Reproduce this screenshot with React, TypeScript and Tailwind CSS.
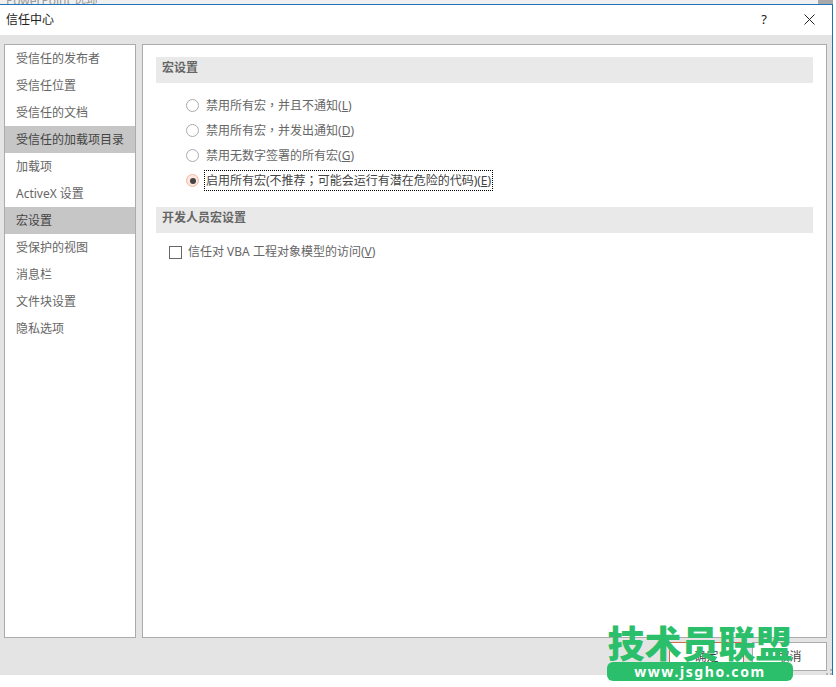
import type { ReactNode } from "react";

const navItems = [
  "受信任的发布者",
  "受信任位置",
  "受信任的文档",
  "受信任的加载项目录",
  "加载项",
  "ActiveX 设置",
  "宏设置",
  "受保护的视图",
  "消息栏",
  "文件块设置",
  "隐私选项",
];

// centred full-width punctuation, as the original dialog font draws it
function Punct({ children }: { children: string }) {
  return <span className="font-['Noto_Sans_CJK_TC',sans-serif]">{children}</span>;
}

function Radio({ checked, label, hotkey }: { checked?: boolean; label: ReactNode; hotkey: string }) {
  return (
    <div className="flex h-[25px] items-center">
      <span
        className={`flex h-[13px] w-[13px] items-center justify-center rounded-full border ${
          checked ? "border-[#f0b8a4] bg-[#fde6de]" : "border-[#ababab] bg-white"
        }`}
      >
        {checked && <span className="h-[6px] w-[6px] rounded-full bg-[#444]" />}
      </span>
      <span
        className={`ml-[5px] px-[1px] text-[12px] leading-[18px] ${
          checked ? "border border-dotted border-black text-[#444]" : "border border-transparent text-[#666]"
        }`}
      >
        {label}(<span className="underline">{hotkey}</span>)
      </span>
    </div>
  );
}

function SectionHeader({ children }: { children: string }) {
  return (
    <div className="flex h-[26px] items-center bg-[#e9e9e9] pb-[4px] pl-[6px] text-[12px] font-bold text-[#666]">
      {children}
    </div>
  );
}

export default function App() {
  return (
    <div className="relative h-[687px] w-[836px] overflow-hidden bg-white font-['Noto_Sans','Noto_Sans_CJK_SC',sans-serif]">
      {/* window behind the dialog */}
      <div className="mr-[3px] flex h-[4px] overflow-hidden bg-[#f0f0f0] pl-[6px] text-[12px] leading-[2px] text-[#999]">
        <span>PowerPoint 选项</span>
        <span className="ml-auto h-[4px] w-[15px] bg-[#a8a8a8]" />
      </div>

      <div className="mr-[3px] flex h-[671px] flex-col border-r border-t border-[#1c75bc] bg-[#e4e4e4]">
        {/* title bar */}
        <div className="flex h-[30px] shrink-0 items-center bg-white pl-[6px] pr-[17px]">
          <span className="text-[12px] text-[#222]">信任中心</span>
          <span className="ml-auto text-[13px] text-[#222]">?</span>
          <svg className="ml-[37px] -mt-[1px]" width="11" height="11" viewBox="0 0 11 11" fill="none" stroke="#222">
            <path d="M.5.5l10 10M10.5.5l-10 10" />
          </svg>
        </div>

        <div className="flex gap-[6px] pl-[4px] pr-[5px] pt-[9px]">
          {/* left nav */}
          <div className="h-[594px] w-[132px] shrink-0 border border-[#ababab] bg-white">
            {navItems.map((item) => (
              <div
                key={item}
                className={`flex h-[27px] items-center pl-[11px] text-[12px] ${
                  item === "受信任的加载项目录" || item === "宏设置"
                    ? "bg-[#c6c6c6] text-[#444]"
                    : "text-[#666]"
                }`}
              >
                {item}
              </div>
            ))}
          </div>

          {/* main panel */}
          <div className="h-[594px] flex-1 border border-[#ababab] bg-white pl-[13px] pr-[13px] pt-[12px]">
            <SectionHeader>宏设置</SectionHeader>
            <div className="pl-[30px] pt-[10px]">
              <Radio label={<>禁用所有宏<Punct>，</Punct>并且不通知</>} hotkey="L" />
              <Radio label={<>禁用所有宏<Punct>，</Punct>并发出通知</>} hotkey="D" />
              <Radio label="禁用无数字签署的所有宏" hotkey="G" />
              <Radio checked label={<>启用所有宏(不推荐<Punct>；</Punct>可能会运行有潜在危险的代码)</>} hotkey="E" />
            </div>
            <div className="pt-[14px]">
              <SectionHeader>开发人员宏设置</SectionHeader>
            </div>
            <div className="flex items-center pl-[13px] pt-[10px] text-[12px] text-[#666]">
              <span className="h-[13px] w-[13px] border border-[#666] bg-white" />
              <span className="ml-[6px]">
                信任对 VBA 工程对象模型的访问(<span className="underline">V</span>)
              </span>
            </div>
          </div>
        </div>

        {/* footer buttons */}
        <div className="flex justify-end gap-[8px] pr-[5px] pt-[4px] text-[12px] text-[#444]">
          <button className="h-[29px] w-[75px] border border-[#d2694a] bg-white">确定</button>
          <button className="h-[29px] w-[75px] border border-[#ababab] bg-white">取消</button>
        </div>
      </div>

      {/* resize grip */}
      <svg className="absolute left-[826px] top-[669px]" width="6" height="6" viewBox="0 0 6 6" fill="#b5b5b5">
        <rect x="4" y="0" width="2" height="2" />
        <rect x="0" y="4" width="2" height="2" />
        <rect x="4" y="4" width="2" height="2" />
      </svg>

      {/* site watermark over the corner */}
      <div className="absolute left-[607px] top-[617px] w-[186px]">
        <div className="whitespace-nowrap text-center text-[37px] font-black leading-[50px] text-[#2bbf6b] font-['Noto_Sans_CJK_SC',sans-serif]">
          技术员联盟
        </div>
        <div className="-mt-[5px] flex h-[19px] items-center justify-center rounded-[6px] bg-[#2bbf6b] text-[14px] font-bold leading-none tracking-[1.6px] text-white">
          www.jsgho.com
        </div>
      </div>
    </div>
  );
}
